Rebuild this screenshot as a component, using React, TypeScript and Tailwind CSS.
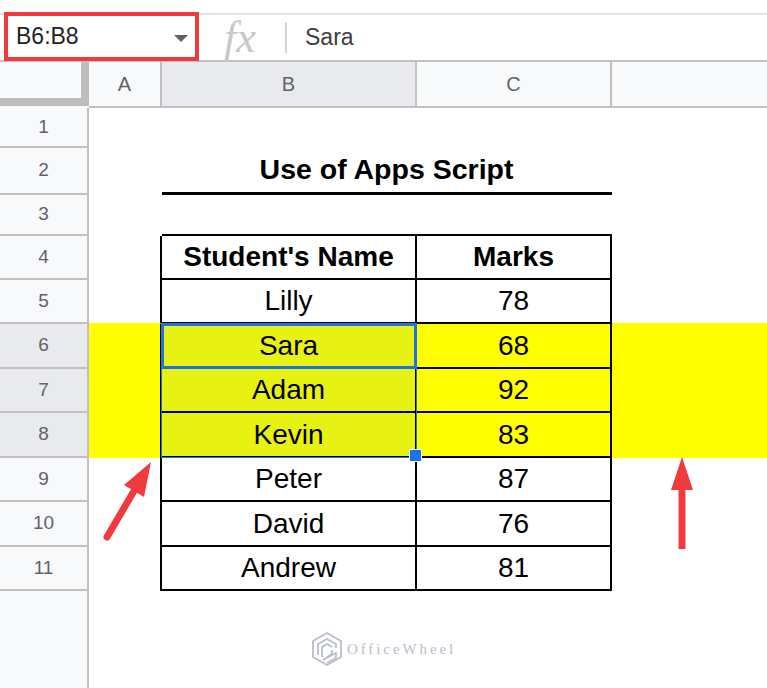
import React from 'react'

const font = { fontFamily: '"Liberation Sans", Arial, sans-serif' }

interface Row {
  n: number
  h: string
  b?: string
  c?: string
  head?: boolean
}

const rows: Row[] = [
  { n: 1, h: 'h-[40px]' },
  { n: 2, h: 'h-[47px]' },
  { n: 3, h: 'h-[41px]' },
  { n: 4, h: 'h-[44px]', b: "Student's Name", c: 'Marks', head: true },
  { n: 5, h: 'h-[44px]', b: 'Lilly', c: '78' },
  { n: 6, h: 'h-[45px]', b: 'Sara', c: '68' },
  { n: 7, h: 'h-[44px]', b: 'Adam', c: '92' },
  { n: 8, h: 'h-[45px]', b: 'Kevin', c: '83' },
  { n: 9, h: 'h-[44px]', b: 'Peter', c: '87' },
  { n: 10, h: 'h-[45px]', b: 'David', c: '76' },
  { n: 11, h: 'h-[44px]', b: 'Andrew', c: '81' },
]

const cols = 'grid grid-cols-[89px_73px_255px_195px_155px]'

function SheetRow({ row }: { row: Row }) {
  const picked = row.n >= 6 && row.n <= 8
  const inTable = row.n >= 4
  const edge = inTable ? 'border-b-2 border-r-2 border-black' : ''
  let title = ''
  if (row.n === 2) title = 'border-b-[3px] border-black'
  if (row.n === 3) title = 'border-b-2 border-black'

  return (
    <div className={`${cols} ${row.h}`}>
      <div
        className={`flex items-center justify-center border-r-2 border-b-2 border-[#c0c0c0] text-[19px] text-[#5f6368] ${
          picked ? 'bg-[#e8eaed]' : 'bg-[#f8f9fa]'
        }`}
      >
        {row.n}
      </div>
      <div
        className={`${picked ? 'bg-[#ffff00]' : ''} ${inTable ? 'border-r-2 border-black' : ''} ${
          row.n === 5 ? 'border-b border-b-[#ffff00]' : ''
        }`}
      />
      <div
        className={`flex items-center justify-center text-[28px] text-black ${edge} ${title} ${
          picked ? 'bg-[#e8f212]' : ''
        } ${row.head ? 'font-bold' : ''}`}
      >
        {row.n === 2 ? '' : row.b}
      </div>
      <div
        className={`flex items-center justify-center text-[28px] text-black ${edge} ${title} ${
          picked ? 'bg-[#ffff00]' : ''
        } ${row.head ? 'font-bold' : ''}`}
      >
        {row.c}
      </div>
      <div className={`${picked ? 'bg-[#ffff00]' : ''} ${row.n === 5 ? 'border-b border-b-[#ffff00]' : ''}`} />
    </div>
  )
}

function Logo() {
  return (
    <svg width="34" height="36" viewBox="0 0 34 36" fill="none" stroke="#b3b8c6" strokeWidth="1.8">
      <path d="M17 2 L31 10 V26 L17 34 L3 26 V10 Z" />
      <path d="M8 24 V13 L17 8 L26 13 V17" />
      <path d="M12 26 V16 L17 13 L22 16" />
      <path d="M13 29 L26 22 V27 L17 32" />
      <path d="M17 26 L22 23 V19" />
    </svg>
  )
}

export default function App() {
  return (
    <div className="relative h-[688px] w-[767px] overflow-hidden bg-white" style={font}>
      {/* formula bar */}
      <div className="mt-[13px] flex h-[49px] border-y-2 border-t-[#e1e1e6] border-b-[#c0c0c0] [margin-top:13px]">
        <div className="relative -mt-[3px] ml-[4px] flex h-[49px] w-[195px] items-center justify-between border-4 border-[#f03a3e] pr-[7px] pl-[8px] text-[23px] text-[#1f2328]">
          <span>B6:B8</span>
          <span className="mt-[3px] h-0 w-0 border-x-[7px] border-t-[7px] border-x-transparent border-t-[#5f6368]" />
        </div>
        <span
          className="ml-[25px] flex w-[61px] items-center text-[44px] leading-none text-[#c6c8ca] italic"
          style={{ fontFamily: '"Liberation Serif", serif' }}
        >
          fx
        </span>
        <div className="my-[7px] h-[31px] w-[2px] bg-[#d6d6d6]" />
        <span className="ml-[18px] flex items-center text-[23px] text-[#3c4043]">Sara</span>
      </div>

      {/* column headers */}
      <div className={`${cols} h-[46px] text-[20px] text-[#5f6368]`}>
        <div className="bg-[#f8f9fa] pr-0">
          <div className="h-[44px] w-[89px] border-r-[8px] border-b-[8px] border-[#bdbdbd]" />
        </div>
        <div className="flex items-center justify-center border-r-2 border-b-2 border-[#c0c0c0] bg-[#f8f9fa]">A</div>
        <div className="flex items-center justify-center border-r-2 border-b-2 border-[#c0c0c0] bg-[#e8eaed]">B</div>
        <div className="flex items-center justify-center border-r-2 border-b-2 border-[#c0c0c0] bg-[#f8f9fa]">C</div>
        <div className="border-b-2 border-[#c0c0c0] bg-[#f8f9fa]" />
      </div>

      {rows.map((row) => (
        <SheetRow key={row.n} row={row} />
      ))}

      {/* row header column below the last row */}
      <div className="h-[97px] w-[89px] border-r-2 border-[#c0c0c0] bg-[#f8f9fa]" />

      {/* title sits over B2:C2 */}
      <div className="absolute top-[147px] left-[161px] flex h-[44px] w-[451px] items-center justify-center text-[28.5px] font-bold text-black">
        Use of Apps Script
      </div>

      {/* selection over B6:B8 */}
      <div className="absolute top-[323px] left-[161px] h-[135px] w-[256px] border-[1.5px] border-[#1a73e8]" />
      <div className="absolute top-[323px] left-[161px] h-[46px] w-[256px] border-[3px] border-[#1a73e8]" />
      <div className="absolute top-[449px] left-[409px] h-[13px] w-[13px] border border-white bg-[#1a73e8]" />

      {/* arrows */}
      <svg className="absolute top-[455px] left-[100px]" width="60" height="90" viewBox="100 455 60 90">
        <path d="M107 537 L134 491" stroke="#f03a3e" strokeWidth="7" strokeLinecap="round" />
        <path d="M151 462 L144 497 L124 485 Z" fill="#f03a3e" />
      </svg>
      <svg className="absolute top-[455px] left-[665px]" width="34" height="100" viewBox="665 455 34 100">
        <path d="M682 485 V549" stroke="#f03a3e" strokeWidth="7" />
        <path d="M682 457 L693 490 H671 Z" fill="#f03a3e" />
      </svg>

      {/* watermark */}
      <div className="absolute top-[631px] left-[310px] flex items-center gap-[3px] opacity-90">
        <Logo />
        <span
          className="text-[15px] tracking-[2.9px] text-[#b3b8c6]"
          style={{ fontFamily: '"Liberation Serif", serif' }}
        >
          OfficeWheel
        </span>
      </div>
    </div>
  )
}
